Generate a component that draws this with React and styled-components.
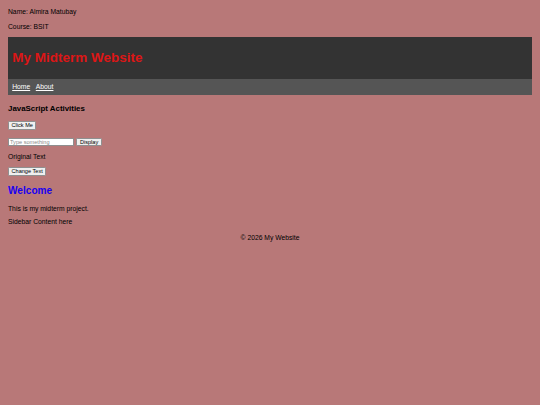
import React from 'react'
import styled, { createGlobalStyle } from 'styled-components'

const GlobalStyle = createGlobalStyle`
  body {
    margin: 8px;
    background: #b87878;
    color: #000;
    font-family: "Liberation Sans", Arial, sans-serif;
    font-size: 6.75px;
    line-height: 7.76px;
  }
`

const InfoLine = styled.p`
  margin: ${props => props.top || 0}px 0 0;
`

const Header = styled.header`
  margin-top: 6.9px;
  background: #333;
  padding: 4.2px;
`

const Title = styled.h1`
  margin: 9px 0;
  font-size: 13.5px;
  line-height: 15.5px;
  font-weight: bold;
  color: #dc1616;
`

const Nav = styled.nav`
  display: flex;
  gap: 5.6px;
  background: #555;
  padding: 4.2px;
`

const NavLink = styled.a`
  color: #fff;
  text-decoration: underline;
  cursor: pointer;
`

const Content = styled.div`
  display: flex;
  flex-direction: column;
  align-items: flex-start;
`

const SectionTitle = styled.h3`
  margin: ${props => props.top}px 0 0;
  font-size: 7.9px;
  line-height: 9.1px;
  font-weight: bold;
`

const Heading = styled.h2`
  margin: ${props => props.top}px 0 0;
  font-size: 10.1px;
  line-height: 11.6px;
  font-weight: bold;
  color: #1a00f0;
`

const Text = styled.p`
  margin: ${props => props.top}px 0 0;
`

const Button = styled.button`
  margin: ${props => props.top || 0}px 0 0;
  height: 8.4px;
  padding: 0 2.5px;
  font-family: "Liberation Sans", Arial, sans-serif;
  font-size: 5.6px;
  line-height: 6.4px;
  color: #000;
  background: #efefef;
  border: 0.8px solid #8f8f8f;
  border-radius: 1.2px;
  cursor: pointer;
`

const InputRow = styled.div`
  display: flex;
  align-items: center;
  gap: 2.4px;
  margin-top: ${props => props.top}px;
`

const TextInput = styled.input`
  width: 66px;
  height: 8.4px;
  box-sizing: border-box;
  padding: 0 1px;
  font-family: "Liberation Sans", Arial, sans-serif;
  font-size: 5.6px;
  background: #fff;
  border: 0.8px solid #8f8f8f;
  outline: none;

  &::placeholder {
    color: #8a8a8a;
  }
`

const Footer = styled.footer`
  margin-top: 8.2px;
  text-align: center;
`

export default function App() {
  return (
    <>
      <GlobalStyle />
      <InfoLine>Name: Almira Matubay</InfoLine>
      <InfoLine top={6.75}>Course: BSIT</InfoLine>
      <Header>
        <Title>My Midterm Website</Title>
      </Header>
      <Nav>
        <NavLink>Home</NavLink>
        <NavLink>About</NavLink>
      </Nav>
      <Content>
        <SectionTitle top={8.7}>JavaScript Activities</SectionTitle>
        <Button top={8.45}>Click Me</Button>
        <InputRow top={8.3}>
          <TextInput placeholder="Type something" />
          <Button>Display</Button>
        </InputRow>
        <Text top={6.7}>Original Text</Text>
        <Button top={6.4}>Change Text</Button>
        <Heading top={8.9}>Welcome</Heading>
        <Text top={8.3}>This is my midterm project.</Text>
        <Text top={6.2}>Sidebar Content here</Text>
      </Content>
      <Footer>© 2026 My Website</Footer>
    </>
  )
}
